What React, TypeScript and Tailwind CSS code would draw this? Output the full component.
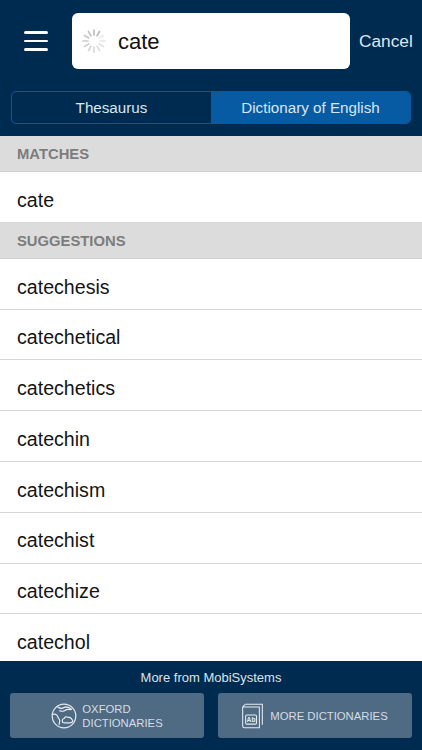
const suggestions = [
  'catechesis',
  'catechetical',
  'catechetics',
  'catechin',
  'catechism',
  'catechist',
  'catechize',
  'catechol',
]

function Spinner() {
  const spokes = Array.from({ length: 12 }, (_, i) => i)
  return (
    <svg width="24" height="24" viewBox="0 0 24 24" className="shrink-0">
      {spokes.map((i) => (
        <line
          key={i}
          x1="12"
          y1="1"
          x2="12"
          y2="6"
          stroke="#a3a3a3"
          strokeWidth="1.7"
          strokeLinecap="round"
          opacity={0.2 + (((i + 10) % 12) / 12) * 0.6}
          transform={`rotate(${i * 30} 12 12)`}
        />
      ))}
    </svg>
  )
}

function GlobeIcon() {
  return (
    <svg width="26" height="26" viewBox="0 0 26 26" fill="none" stroke="#e6ebf0" strokeWidth="1.2" strokeLinejoin="round" className="shrink-0">
      <circle cx="13" cy="13" r="11.8" />
      <path d="M6 3.8c2 .6 3 1.8 4.8 1.6 1.5-.2 2.6-1.6 4.2-1.6 2.2.2 4 1 5.6 2.6-1.6.4-3.4-.2-5 .2-1.4.4-2 1.4-3.4 1.6-1.6.2-2.6-.6-4-.2" />
      <path d="M1.6 11.5c1.6-.6 3.2-.4 4.4.8 1 1 .8 2.4 1.8 3.4.8.8 1.2 2 .8 3.2-.2 1-.6 2-.4 3" />
      <path d="M11.5 18.5c-.6-1.4.2-2.8 1.6-3 .6-1.6 2.8-2.4 4-1 1.4-.4 3 .4 3.6 1.8.8.2 1.2 1 1 1.8-.4 1.4-2 1.8-3.4 1.8h-4.3c-1.1 0-2-.1-2.5-.6z" />
    </svg>
  )
}

function BookIcon() {
  return (
    <svg width="21" height="26" viewBox="0 0 22 26" fill="none" stroke="#e6ebf0" strokeWidth="1.1" className="shrink-0">
      <path d="M3.5.7h17.8v21.5" />
      <path d="M3.5.7.7 3.5v20a1.8 1.8 0 0 0 1.8 1.8h15.7V3.5H.7" />
      <rect x="3.8" y="12" width="11.4" height="9.5" rx="1.2" />
      <text x="9.5" y="19.3" textAnchor="middle" fontSize="7" fontWeight="700" fill="#e6ebf0" stroke="none" fontFamily="'Liberation Sans', sans-serif">Ab</text>
    </svg>
  )
}

function SectionHeader({ title }: { title: string }) {
  return (
    <div className="flex h-[36px] items-center border-b border-[#d0d0d0] bg-[#dcdcdc] px-[17px] pt-[1px] text-[14.8px] font-bold text-[#7c7c7c]">
      {title}
    </div>
  )
}

function Row({ word }: { word: string }) {
  return (
    <div className="flex h-[50.8px] shrink-0 items-center border-b border-[#d6d6d6] bg-white px-[17px] pt-[7px] text-[19.6px] text-[#141414]">
      {word}
    </div>
  )
}

export default function App() {
  return (
    <div className="flex h-[750px] w-[422px] flex-col overflow-hidden bg-white font-['Liberation_Sans',sans-serif]">
      <header className="h-[136px] shrink-0 bg-[#002b51]">
        <div className="flex items-center pt-[13px]">
          <button className="flex w-[72px] justify-center">
            <span className="flex w-6 flex-col gap-[6px]">
              <span className="h-[2.5px] rounded-sm bg-white" />
              <span className="h-[2.5px] rounded-sm bg-white" />
              <span className="h-[2.5px] rounded-sm bg-white" />
            </span>
          </button>
          <div className="flex h-[56px] w-[278px] items-center gap-[12px] rounded-md bg-white pl-[10px] text-[22px] text-[#111]">
            <Spinner />
            <span className="pt-[1px]">cate</span>
          </div>
          <span className="ml-[9px] pt-[1px] text-[17.3px] text-[#dfe6ed]">Cancel</span>
        </div>
        <div className="mx-[11px] mt-[22px] flex h-[33px] overflow-hidden rounded-[5px] border border-[#075ba3] pt-0 text-[15.2px] text-[#dbe6f0]">
          <div className="flex w-[199px] items-center justify-center pt-[2px]">Thesaurus</div>
          <div className="flex flex-1 items-center justify-center bg-[#075ba3] pt-[2px]">Dictionary of English</div>
        </div>
      </header>

      <main className="min-h-0 flex-1 overflow-hidden">
        <SectionHeader title="MATCHES" />
        <Row word="cate" />
        <SectionHeader title="SUGGESTIONS" />
        {suggestions.map((w) => (
          <Row key={w} word={w} />
        ))}
      </main>

      <footer className="h-[89px] shrink-0 bg-[#002b51] px-[10px]">
        <div className="pt-[9px] text-center text-[13px] leading-[15px] text-[#dbe3ea]">More from MobiSystems</div>
        <div className="mt-[8px] flex gap-[14px]">
          <button className="flex h-[45px] w-[194px] items-center justify-center gap-[5px] rounded-[3px] bg-[#4f6a83] text-left text-[11.3px] leading-[13.5px] text-[#d5dde5]">
            <GlobeIcon />
            <span className="pt-[2px]">
              OXFORD
              <br />
              DICTIONARIES
            </span>
          </button>
          <button className="flex h-[45px] w-[194px] items-center justify-center gap-[7px] rounded-[3px] bg-[#4f6a83] text-left text-[11.3px] text-[#d5dde5]">
            <BookIcon />
            <span className="pt-[1px]">MORE DICTIONARIES</span>
          </button>
        </div>
      </footer>
    </div>
  )
}
